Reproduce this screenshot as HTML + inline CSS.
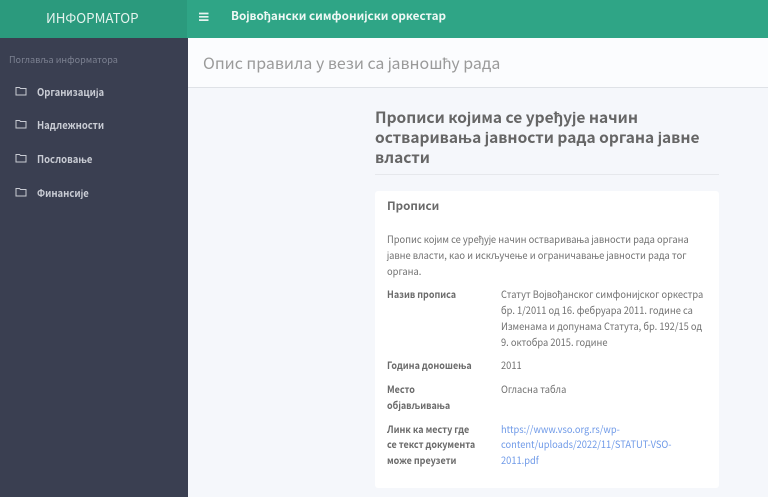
<!DOCTYPE html>
<html lang="sr"><head><meta charset="utf-8"><title>Информатор</title>
<style>
html,body{margin:0;padding:0;width:768px;height:497px;overflow:hidden;background:#f5f7fb}
body{position:relative;font-family:"Noto Sans CJK SC","Liberation Sans",sans-serif;color:#6b6b6b}
.a{position:absolute;white-space:nowrap;line-height:1;transform-origin:0 50%}
.nav{font-size:10.4px;font-weight:700;color:#c9ccd4;left:37px;line-height:12px;transform:scaleX(.913)}
.b{font-size:10px;color:#707070;line-height:16px;transform:scaleX(.935)}
.l{font-size:10px;font-weight:700;color:#6a6a6a;left:387px;line-height:16px;transform:scaleX(.9)}
.v{font-size:10px;color:#707070;left:501px;line-height:16px;transform:scaleX(.93)}
svg{position:absolute}
</style></head><body>
<div class="a" style="left:0;top:0;width:768px;height:38px;background:#2fa586"></div>
<div class="a" style="left:0;top:0;width:187px;height:38px;background:#2b9a7d"></div>
<div class="a" style="left:0;top:38px;width:188px;height:459px;background:#3a3f51"></div>
<div class="a" style="left:188px;top:38px;width:580px;height:49px;background:#fbfcfe;border-bottom:1px solid #dfe2e7"></div>
<div class="a" style="left:46px;top:9px;font-size:13.3px;line-height:18px;color:#e4f3ee">ИНФОРМАТОР</div>
<svg style="left:199px;top:12px" width="10" height="10" viewBox="0 0 10 10"><path d="M0 1.5H9.5M0 4.8H9.5M0 8.1H9.5" stroke="#e6f4f0" stroke-width="1.7"/></svg>
<div class="a" style="left:231px;top:7px;font-size:11.7px;line-height:18px;font-weight:700;color:#eef8f5">Војвођански симфонијски оркестар</div>
<div class="a" style="left:9px;top:53px;font-size:9.1px;line-height:12px;color:#7c8191">Поглавља информатора</div>
<svg style="left:15px;top:86px" width="12" height="10" viewBox="0 0 12 10"><path d="M1 1.5H4.5L5.5 2.5H11V9H1Z" fill="none" stroke="#c9ccd4" stroke-width="1"/></svg>
<svg style="left:15px;top:119px" width="12" height="10" viewBox="0 0 12 10"><path d="M1 1.5H4.5L5.5 2.5H11V9H1Z" fill="none" stroke="#c9ccd4" stroke-width="1"/></svg>
<svg style="left:15px;top:153px" width="12" height="10" viewBox="0 0 12 10"><path d="M1 1.5H4.5L5.5 2.5H11V9H1Z" fill="none" stroke="#c9ccd4" stroke-width="1"/></svg>
<svg style="left:15px;top:187px" width="12" height="10" viewBox="0 0 12 10"><path d="M1 1.5H4.5L5.5 2.5H11V9H1Z" fill="none" stroke="#c9ccd4" stroke-width="1"/></svg>
<div class="a nav" style="top:86px">Организација</div>
<div class="a nav" style="top:119px">Надлежности</div>
<div class="a nav" style="top:153px">Пословање</div>
<div class="a nav" style="top:187px">Финансије</div>
<div class="a" style="left:203px;top:51px;font-size:15.95px;line-height:22px;color:#9a9a9a">Опис правила у вези са јавношћу рада</div>
<div class="a" style="left:375px;top:107px;font-size:15.5px;line-height:20px;font-weight:700;color:#666">Прописи којима се уређује начин</div>
<div class="a" style="left:375px;top:127px;font-size:15.5px;line-height:20px;font-weight:700;color:#666">остваривања јавности рада органа јавне</div>
<div class="a" style="left:375px;top:147px;font-size:15.5px;line-height:20px;font-weight:700;color:#666">власти</div>
<div class="a" style="left:375px;top:174px;width:344px;height:1px;background:#e6e8ec"></div>
<div class="a" style="left:375px;top:191px;width:344px;height:297px;background:#fff;border-radius:3px"></div>
<div class="a" style="left:387px;top:198px;font-size:11.6px;line-height:16px;font-weight:700;color:#6a6a6a">Прописи</div>
<div class="a b" style="left:387px;top:231px">Пропис којим се уређује начин остваривања јавности рада органа</div>
<div class="a b" style="left:387px;top:247px">јавне власти, као и искључење и ограничавање јавности рада тог</div>
<div class="a b" style="left:387px;top:263px">органа.</div>
<div class="a l" style="top:286px">Назив прописа</div>
<div class="a v" style="top:286px">Статут Војвођанског симфонијског оркестра</div>
<div class="a v" style="top:302px">бр. 1/2011 од 16. фебруара 2011. године са</div>
<div class="a v" style="top:318px">Изменама и допунама Статута, бр. 192/15 од</div>
<div class="a v" style="top:334px">9. октобра 2015. године</div>
<div class="a l" style="top:357px">Година доношења</div>
<div class="a v" style="top:357px">2011</div>
<div class="a l" style="top:381px">Место</div>
<div class="a l" style="top:397px">објављивања</div>
<div class="a v" style="top:381px">Огласна табла</div>
<div class="a l" style="top:421px">Линк ка месту где</div>
<div class="a l" style="top:436px">се текст документа</div>
<div class="a l" style="top:452px">може преузети</div>
<div class="a v" style="top:421px;color:#6f9ae8">https://www.vso.org.rs/wp-</div>
<div class="a v" style="top:436px;color:#6f9ae8">content/uploads/2022/11/STATUT-VSO-</div>
<div class="a v" style="top:452px;color:#6f9ae8">2011.pdf</div>
</body></html>
